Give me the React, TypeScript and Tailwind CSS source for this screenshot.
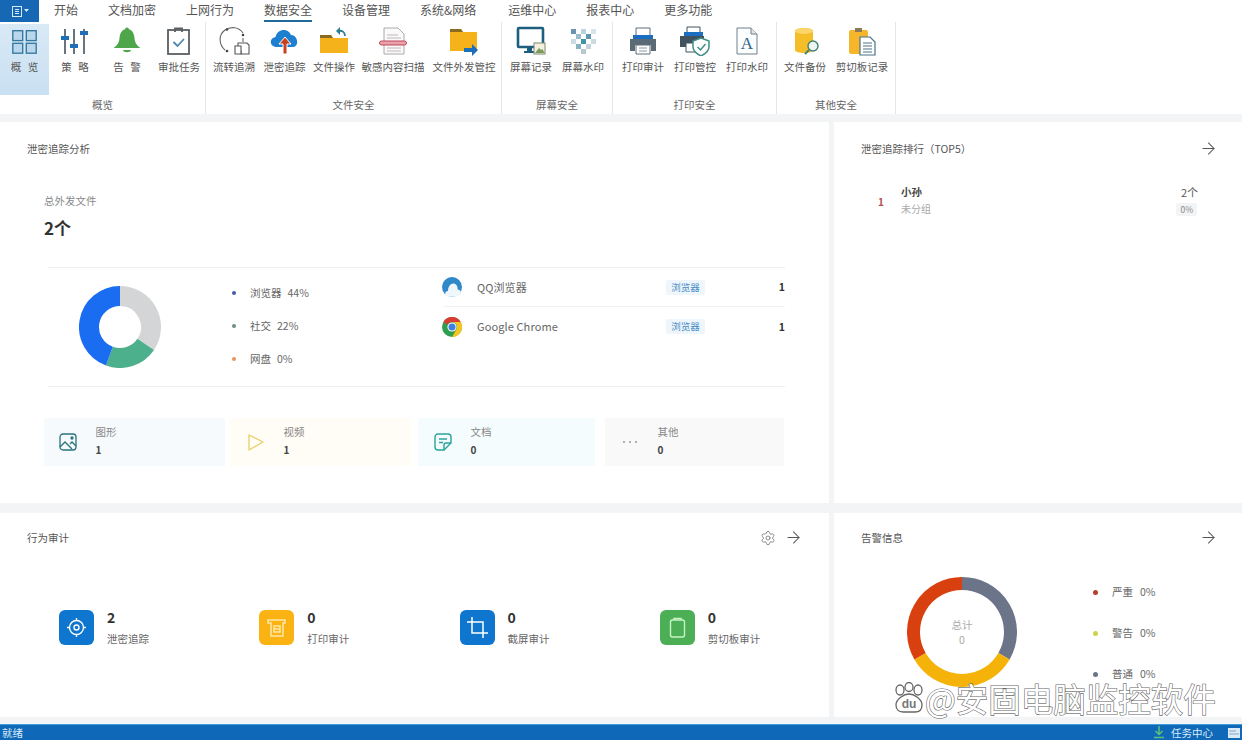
import React from 'react';
import { ArrowRight, Settings } from 'lucide-react';

const FONT = "font-['Noto_Sans_CJK_SC','Liberation_Sans',sans-serif]";

const polar = (cx: number, cy: number, r: number, deg: number) => {
  const a = ((deg - 90) * Math.PI) / 180;
  return [cx + r * Math.cos(a), cy + r * Math.sin(a)];
};

const arcPath = (cx: number, cy: number, r: number, from: number, to: number) => {
  const [x1, y1] = polar(cx, cy, r, from);
  const [x2, y2] = polar(cx, cy, r, to);
  return `M${x1} ${y1}A${r} ${r} 0 ${to - from > 180 ? 1 : 0} 1 ${x2} ${y2}`;
};

const Donut: React.FC<{ size: number; r: number; width: number; parts: { from: number; to: number; color: string }[] }> = ({ size, r, width, parts }) => (
  <svg width={size} height={size} viewBox={`0 0 ${size} ${size}`}>
    {parts.map((p) => (
      <path key={p.from} d={arcPath(size / 2, size / 2, r, p.from, p.to)} fill="none" stroke={p.color} strokeWidth={width} />
    ))}
  </svg>
);

/* ribbon icons */
const IconOverview = () => (
  <svg width="27" height="27" viewBox="0 0 30 30" fill="#b9d6ea" stroke="#33789f" strokeWidth="1.500">
    <rect x="2" y="3" width="11" height="11" /><rect x="17" y="3" width="11" height="11" />
    <rect x="2" y="17" width="11" height="11" /><rect x="17" y="17" width="11" height="11" />
  </svg>
);
const IconPolicy = () => (
  <svg width="30" height="30" viewBox="0 0 30 30">
    <path d="M5 3v25M14 3v25M24 3v25" stroke="#44525c" strokeWidth="1.600" />
    <rect x="1" y="10" width="8" height="4" fill="#1f6fb5" /><rect x="10" y="18" width="8" height="4" fill="#1f6fb5" /><rect x="20" y="5" width="8" height="4" fill="#1f6fb5" />
  </svg>
);
const IconBell = () => (
  <svg width="30" height="30" viewBox="0 0 30 30" fill="#4ea64a">
    <circle cx="15" cy="3.500" r="2" />
    <path d="M15 3c-5 0-7 4-7.500 9-.4 5-2 7-6 10h27c-4-3-5.600-5-6-10C22 7 20 3 15 3z" />
    <path d="M11 24h8c-.5 3-7.500 3-8 0z" />
  </svg>
);
const IconApprove = () => (
  <svg width="30" height="30" viewBox="0 0 30 30" fill="none" stroke="#5a5f63" strokeWidth="1.800">
    <rect x="4" y="4" width="21" height="24" />
    <path d="M11 6V2.500h7V6" />
    <path d="M9.500 16l4 4 6.500-7" stroke="#4c86a8" />
  </svg>
);
const IconFlow = () => (
  <svg width="32" height="30" viewBox="0 0 32 30" fill="none">
    <path d="M7 24C1 19 0 9 7 4c6-4 14-3 18 3" stroke="#666" strokeWidth="1.100" />
    <path d="M25 12v4" stroke="#666" strokeWidth="1.100" />
    <circle cx="9" cy="3.500" r="1.300" fill="#444" /><circle cx="25" cy="9" r="1.300" fill="#444" /><circle cx="9" cy="25" r="1.300" fill="#444" />
    <path d="M20 17h9l2 2v9h-8v-3h-3z" fill="#fff" stroke="#555" strokeWidth="1.100" />
    <path d="M17 20h6v8h-6z" fill="#fff" stroke="#555" strokeWidth="1.100" />
  </svg>
);
const IconCloud = () => (
  <svg width="30" height="30" viewBox="0 0 30 30">
    <path d="M7 21c-8 0-8-9-1.500-10C7 3 18 1 21 9c7 0 9 12 1 12z" fill="#1c7fd0" />
    <path d="M15 11l-6 7h4v10h4V18h4z" fill="#c8401c" stroke="#fff" strokeWidth="1" />
  </svg>
);
const IconFolderBack = () => (
  <svg width="30" height="30" viewBox="0 0 30 30">
    <path d="M1 9h11l2 3h15v15H1z" fill="#f6b21b" />
    <path d="M1 9h11l2 3H1z" fill="#8a6a22" />
    <path d="M26 10c0-4-3-6-7-5" fill="none" stroke="#2b7f8f" strokeWidth="1.800" />
    <path d="M21 1l-4 4 4 4z" fill="#2b7f8f" />
  </svg>
);
const IconScan = () => (
  <svg width="30" height="30" viewBox="0 0 30 30">
    <path d="M6 2h14l6 6v20H6z" fill="#fafafa" stroke="#aaa" />
    <path d="M9 9h11M9 12h14M9 22h14M9 25h14" stroke="#c4b6b6" strokeWidth="1" />
    <rect x="1.500" y="15" width="27" height="4" rx="2" fill="#e6a3aa" stroke="#c2455a" />
  </svg>
);
const IconFolderOut = () => (
  <svg width="30" height="30" viewBox="0 0 30 30">
    <path d="M1 3h11l2 3h14v19H1z" fill="#f6b21b" />
    <path d="M1 3h11l2 3H1z" fill="#8a6a22" />
    <path d="M15 22h8v-4l6 6-6 6v-4h-8z" fill="#1c6fb8" />
  </svg>
);
const IconScreen = () => (
  <svg width="30" height="30" viewBox="0 0 30 30">
    <rect x="2" y="2" width="25" height="19" rx="1" fill="#fff" stroke="#1d5f80" strokeWidth="2.600" />
    <path d="M8 25h11v2H8z" fill="#1d5f80" /><path d="M11 21h5v4h-5z" fill="#1d5f80" />
    <rect x="18" y="17" width="11" height="11" fill="#f4f0df" stroke="#7d8a6c" />
    <path d="M19 27l4-5 2 2 1.500-1 2 4z" fill="#7d9a5a" />
  </svg>
);
const IconMark = () => {
  const cells = [[3, 3, '#6c93ad'], [13, 3, '#b8d2e0'], [23, 3, '#d7e3ea'], [8, 8, '#9bbccd'], [18, 8, '#5f95ad'], [3, 13, '#c9dbe4'], [13, 13, '#3f95a5'], [23, 13, '#cfdadf'], [8, 18, '#8ab0c3'], [18, 18, '#c5d2d8'], [13, 23, '#b9c7ce']] as const;
  return (
    <svg width="30" height="30" viewBox="0 0 30 30">
      {cells.map(([x, y, c]) => <rect key={`${x}-${y}`} x={x} y={y} width="5" height="5" fill={c} />)}
    </svg>
  );
};
const IconPrinter = () => (
  <svg width="30" height="30" viewBox="0 0 30 30">
    <path d="M8 2h14v8H8z" fill="#fff" stroke="#5f6f7a" />
    <path d="M5 9h20v7H5z" fill="#1c6fc0" />
    <path d="M2 13h26v12h-5v-6H7v6H2z" fill="#5b6b76" />
    <path d="M8 19h14v9H8z" fill="#fff" stroke="#5f6f7a" />
    <path d="M11 22h8M11 25h8" stroke="#8b98a1" />
  </svg>
);
const IconPrintCtl = () => (
  <svg width="32" height="30" viewBox="0 0 32 30">
    <path d="M8 1h13v7H8z" fill="#fff" stroke="#41525e" />
    <path d="M5 6h19v6H5z" fill="#1c6fc0" />
    <path d="M1 10h24v11H1z" fill="#41525e" />
    <path d="M7 17h12v9H7z" fill="#fff" stroke="#41525e" />
    <path d="M22 12l8 3v6c0 4-4 7-8 9-4-2-8-5-8-9v-6z" fill="#fff" stroke="#3f8f86" strokeWidth="1.500" />
    <path d="M18.500 21l3 3 5-6" fill="none" stroke="#3f8f86" strokeWidth="1.500" />
  </svg>
);
const IconPrintMark = () => (
  <svg width="30" height="30" viewBox="0 0 30 30">
    <path d="M5 2h14l6 6v20H5z" fill="#fbfdff" stroke="#71808a" />
    <path d="M19 2v6h6" fill="#dfe6ea" stroke="#71808a" />
    <text x="15" y="23" textAnchor="middle" fontSize="17" fontFamily="Liberation Serif" fill="#2c6485">A</text>
  </svg>
);
const IconBackup = () => (
  <svg width="30" height="30" viewBox="0 0 30 30" className="ml-[3px]">
    <path d="M3 5c0-4 18-4 18 0v19c0 4-18 4-18 0z" fill="#f5bd28" />
    <ellipse cx="12" cy="5" rx="9" ry="3" fill="#fbd46a" />
    <circle cx="21" cy="20" r="5" fill="#eef6f4" stroke="#46806f" strokeWidth="1.400" />
    <path d="M17 24l-4 4" stroke="#46806f" strokeWidth="2" />
  </svg>
);
const IconClip = () => (
  <svg width="30" height="30" viewBox="0 0 30 30">
    <rect x="2" y="4" width="19" height="24" rx="2" fill="#f5b62c" />
    <path d="M8 6V2h7v4z" fill="#8a7a55" />
    <path d="M13 11h10l5 5v13H13z" fill="#fff" stroke="#4b7288" strokeWidth="1.200" />
    <path d="M16 17h9M16 20h9M16 23h9M16 26h9" stroke="#4b7288" />
  </svg>
);

type RibbonItem = { label: string; width: string; icon: React.ReactNode; active?: boolean };

const GROUPS: { title: string; width: string; pad: string; items: RibbonItem[] }[] = [
  {
    title: '概览', width: 'w-[206px]', pad: 'pl-0', items: [
      { label: '概 览', width: 'w-[49px]', icon: <IconOverview />, active: true },
      { label: '策 略', width: 'w-[52px]', icon: <IconPolicy /> },
      { label: '告 警', width: 'w-[52px]', icon: <IconBell /> },
      { label: '审批任务', width: 'w-[52px]', icon: <IconApprove /> },
    ],
  },
  {
    title: '文件安全', width: 'w-[296px]', pad: 'pl-[2px]', items: [
      { label: '流转追溯', width: 'w-[52px]', icon: <IconFlow /> },
      { label: '泄密追踪', width: 'w-[49px]', icon: <IconCloud /> },
      { label: '文件操作', width: 'w-[50px]', icon: <IconFolderBack /> },
      { label: '敏感内容扫描', width: 'w-[68px]', icon: <IconScan /> },
      { label: '文件外发管控', width: 'w-[74px]', icon: <IconFolderOut /> },
    ],
  },
  {
    title: '屏幕安全', width: 'w-[111px]', pad: 'pl-[3px]', items: [
      { label: '屏幕记录', width: 'w-[52px]', icon: <IconScreen /> },
      { label: '屏幕水印', width: 'w-[52px]', icon: <IconMark /> },
    ],
  },
  {
    title: '打印安全', width: 'w-[164px]', pad: 'pl-[4px]', items: [
      { label: '打印审计', width: 'w-[52px]', icon: <IconPrinter /> },
      { label: '打印管控', width: 'w-[52px]', icon: <IconPrintCtl /> },
      { label: '打印水印', width: 'w-[52px]', icon: <IconPrintMark /> },
    ],
  },
  {
    title: '其他安全', width: 'w-[119px]', pad: 'pl-[2px]', items: [
      { label: '文件备份', width: 'w-[52px]', icon: <IconBackup /> },
      { label: '剪切板记录', width: 'w-[62px]', icon: <IconClip /> },
    ],
  },
];

const TABS = ['开始', '文档加密', '上网行为', '数据安全', '设备管理', '系统&网络', '运维中心', '报表中心', '更多功能'];

const TopBar = () => (
  <header className="bg-white shrink-0">
    <div className="flex h-[22px] items-start">
      <div className="flex h-[22px] w-[39px] items-center justify-center gap-[1px] bg-[#1668b4]">
        <svg width="12" height="13" viewBox="0 0 12 13" fill="none" stroke="#d5e8f7" strokeWidth="1">
          <rect x="1.500" y="1.500" width="9" height="10" /><path d="M4 4.500h4M4 6.500h4M4 8.500h4" />
        </svg>
        <svg width="5" height="4" viewBox="0 0 5 4"><path d="M0 0h5L2.500 3z" fill="#d5e8f7" /></svg>
      </div>
      <nav className="ml-[15px] flex gap-[30px] text-[12px] leading-[20px] text-[#555]">
        {TABS.map((t) => (
          <span key={t} className={t === '数据安全' ? 'h-[22px] border-b-2 border-[#1f6a99]' : t === '系统&网络' ? 'pr-[2px]' : ''}>{t}</span>
        ))}
      </nav>
    </div>
    <div className="flex h-[92px]">
      {GROUPS.map((g) => (
        <div key={g.title} className={`${g.width} flex flex-col border-r border-[#e4e6e8]`}>
          <div className={`flex h-[71px] mt-[2px] ${g.pad}`}>
            {g.items.map((it) => (
              <div key={it.label} className={`${it.width} flex flex-col items-center pt-[2px] ${it.active ? 'bg-gradient-to-b from-[#d9e9f6] to-[#c9e0f2]' : ''}`}>
                <div className="flex h-[30px] items-center justify-center">{it.icon}</div>
                <span className="mt-[4px] whitespace-nowrap text-[10.500px] leading-[14px] text-[#555] [word-spacing:4px]">{it.label}</span>
              </div>
            ))}
          </div>
          <div className="mt-[3px] text-center text-[10.500px] leading-[14px] text-[#666]">{g.title}</div>
        </div>
      ))}
    </div>
  </header>
);

const LEGEND = [
  { dot: 'bg-[#4a5aa8]', label: '浏览器', value: '44%' },
  { dot: 'bg-[#6f8d84]', label: '社交', value: '22%' },
  { dot: 'bg-[#e8935a]', label: '网盘', value: '0%' },
];

const QqLogo = () => (
  <svg width="20" height="20" viewBox="0 0 20 20">
    <circle cx="10" cy="10" r="10" fill="#2f88c8" />
    <path d="M5 19c-3-1-2-5 1-5 0-5 3-8 6-7.500 3 .5 4 4 3.500 6 3 0 4.500 3 3 5.500-3 2-9 2.500-13.500 1z" fill="#f0f7fb" />
  </svg>
);
const ChromeLogo = () => (
  <svg width="20" height="20" viewBox="0 0 20 20">
    <circle cx="10" cy="10" r="10" fill="#2e9e4f" />
    <path d="M1.300 5A10 10 0 0 1 18.700 5H10A5 5 0 0 0 5.700 7.500z" fill="#d93c32" />
    <path d="M18.700 5A10 10 0 0 1 10 20l4.300-7.500A5 5 0 0 0 10 5z" fill="#f6c41c" />
    <circle cx="10" cy="10" r="4.600" fill="#fff" />
    <circle cx="10" cy="10" r="3.500" fill="#3f7fe0" />
  </svg>
);

const IconImage = () => (
  <svg width="18" height="18" viewBox="0 0 18 18" fill="none" stroke="#28737e" strokeWidth="1.300">
    <rect x="1" y="1" width="16" height="16" rx="3" /><path d="M1 14l5-5 7 7M11 11l2-2 4 4" /><circle cx="13" cy="5" r="1" fill="#28737e" />
  </svg>
);
const IconPlay = () => (
  <svg width="18" height="18" viewBox="0 0 18 18" fill="none" stroke="#e8cf6a" strokeWidth="1.300">
    <path d="M2 2l14 7-14 8z" strokeLinejoin="round" />
  </svg>
);
const IconDoc = () => (
  <svg width="18" height="18" viewBox="0 0 18 18" fill="none" stroke="#2aa39b" strokeWidth="1.400">
    <path d="M4 1h10a3 3 0 0 1 3 3v6l-7 7H4a3 3 0 0 1-3-3V4a3 3 0 0 1 3-3z" /><path d="M5 6h8M5 9.500h4M10 17v-5a2 2 0 0 1 2-2h5" />
  </svg>
);
const IconMore = () => (
  <svg width="16" height="4" viewBox="0 0 16 4" fill="#999">
    <circle cx="2" cy="2" r="1" /><circle cx="8" cy="2" r="1" /><circle cx="14" cy="2" r="1" />
  </svg>
);

const TYPES = [
  { name: '图形', count: 1, box: 'w-[181px] bg-[#f6fafd] pl-[15px]', icon: <IconImage /> },
  { name: '视频', count: 1, box: 'ml-[5px] w-[181px] bg-[#fffdf6] pl-[17px]', icon: <IconPlay /> },
  { name: '文档', count: 0, box: 'ml-[7px] w-[177px] bg-[#f5fcfd] pl-[16px]', icon: <IconDoc /> },
  { name: '其他', count: 0, box: 'ml-[10px] w-[179px] bg-[#f9f9f9] pl-[16px]', icon: <IconMore /> },
];

const BROWSERS = [
  { name: 'QQ浏览器', logo: <QqLogo /> },
  { name: 'Google Chrome', logo: <ChromeLogo /> },
];

const LeakPanel = () => (
  <section className="h-[381px] bg-white">
    <h2 className="pl-[27px] pt-[19px] text-[10.500px] leading-[15px] text-[#555]">泄密追踪分析</h2>
    <div className="pl-[44px] pt-[37px] text-[10.500px] leading-[15px] text-[#888]">总外发文件</div>
    <div className="pl-[44px] pt-[8px] text-[17px] font-bold leading-[24px] text-[#333]">2个</div>
    <div className="ml-[48px] mt-[27px] flex h-[120px] w-[737px] border-y border-[#eceef0]">
      <div className="ml-[31px] flex w-[82px] items-center">
        <Donut size={82} r={31} width={20} parts={[
          { from: 0, to: 124, color: '#d4d5d6' },
          { from: 124, to: 200, color: '#4db08c' },
          { from: 200, to: 360, color: '#1a6cf0' },
        ]} />
      </div>
      <div className="ml-[71px] flex w-[212px] flex-col gap-[17px] pt-[17px]">
        {LEGEND.map((l) => (
          <div key={l.label} className="flex h-[16px] items-center text-[10.500px] text-[#666]">
            <span className={`h-[4px] w-[4px] rounded-full ${l.dot}`} />
            <span className="ml-[14px]">{l.label}</span>
            <span className="ml-[6px]">{l.value}</span>
          </div>
        ))}
      </div>
      <div className="flex flex-1 flex-col">
        {BROWSERS.map((b, i) => (
          <div key={b.name} className={`flex h-[39px] items-center ${i === 0 ? 'border-b border-[#f0f1f2]' : ''}`}>
            <span className="ml-[-2px] w-[20px]">{b.logo}</span>
            <span className="ml-[15px] w-[189px] text-[11px] tracking-[0.1px] text-[#666]">{b.name}</span>
            <span className="w-[39px] rounded-[2px] bg-[#eef6fc] text-center text-[9.500px] leading-[15px] text-[#4a8cc4]">浏览器</span>
            <span className="ml-auto text-[10.500px] font-bold text-[#333]">1</span>
          </div>
        ))}
      </div>
    </div>
    <div className="ml-[44px] mt-[31px] flex w-[740px]">
      {TYPES.map((t) => (
        <div key={t.name} className={`${t.box} flex h-[48px] shrink-0 items-center`}>
          <span className="flex w-[18px] justify-center">{t.icon}</span>
          <div className="ml-[18.500px] mt-[-2px]">
            <div className="text-[10.500px] leading-[16px] text-[#888]">{t.name}</div>
            <div className="mt-[2px] text-[10px] font-bold leading-[16px] text-[#444]">{t.count}</div>
          </div>
        </div>
      ))}
    </div>
  </section>
);

const RankPanel = () => (
  <section className="h-[381px] bg-white">
    <div className="flex items-center justify-between pl-[27px] pr-[24px] pt-[17px]">
      <h2 className="text-[10.500px] leading-[19px] text-[#555]">泄密追踪排行（TOP5）</h2>
      <ArrowRight size={19} strokeWidth={1.300} className="text-[#555]" />
    </div>
    <div className="mt-[26px] flex pl-[44px] pr-[44px]">
      <span className="w-[23px] pt-[11px] text-[10px] font-bold leading-[14px] text-[#b5504a]">1</span>
      <div>
        <div className="text-[10.500px] font-bold leading-[16px] text-[#444]">小孙</div>
        <div className="text-[10px] leading-[18px] text-[#aaa]">未分组</div>
      </div>
      <div className="ml-auto flex flex-col items-end">
        <div className="text-[11px] leading-[16px] text-[#555]">2个</div>
        <div className="mt-[3px] mr-[1px] rounded-[2px] bg-[#f3f4f5] px-[4px] text-[8.500px] leading-[13px] text-[#888]">0%</div>
      </div>
    </div>
  </section>
);

const AUDITS = [
  { value: 2, label: '泄密追踪', bg: 'bg-[#0f76cf]', icon: (
    <svg width="21" height="21" viewBox="0 0 21 21" fill="none" stroke="#fff" strokeWidth="1.400"><circle cx="10.500" cy="10.500" r="7" /><circle cx="10.500" cy="10.500" r="2.500" /><path d="M10.500 1v3M10.500 17v3M1 10.500h3M17 10.500h3" /></svg>
  ) },
  { value: 0, label: '打印审计', bg: 'bg-[#fbb313]', icon: (
    <svg width="21" height="21" viewBox="0 0 21 21" fill="none" stroke="#ffe9a8" strokeWidth="1.500"><path d="M2 3h17v3h-2v13H5V6H2z" /><path d="M8 9h6v6H8zM8 12h6" /></svg>
  ) },
  { value: 0, label: '截屏审计', bg: 'bg-[#0f76cf]', icon: (
    <svg width="21" height="21" viewBox="0 0 21 21" fill="none" stroke="#fff" strokeWidth="1.500"><path d="M5 0v16h16" /><path d="M0 5h16v16" /></svg>
  ) },
  { value: 0, label: '剪切板审计', bg: 'bg-[#4cae55]', icon: (
    <svg width="21" height="21" viewBox="0 0 21 21" fill="none" stroke="#c9f5c6" strokeWidth="1.400"><rect x="3.500" y="3" width="14" height="17" rx="2" /><path d="M7 3V1.500h7V3" /></svg>
  ) },
];

const AuditPanel = () => (
  <section className="h-[204px] bg-white">
    <div className="flex items-center pl-[27px] pr-[26px] pt-[15px]">
      <h2 className="text-[10.500px] leading-[19px] text-[#555]">行为审计</h2>
      <Settings size={16} strokeWidth={1.100} className="ml-auto text-[#666]" />
      <ArrowRight size={19} strokeWidth={1.300} className="ml-[8px] text-[#555]" />
    </div>
    <div className="mt-[63px] flex pl-[59px]">
      {AUDITS.map((a) => (
        <div key={a.label} className="flex w-[200.250px] shrink-0">
          <div className={`${a.bg} flex h-[35px] w-[35px] items-center justify-center rounded-[6px]`}>{a.icon}</div>
          <div className="ml-[13px] mt-[-2px]">
            <div className="text-[14px] font-bold leading-[18px] text-[#333]">{a.value}</div>
            <div className="mt-[5px] text-[10.500px] leading-[15px] text-[#666]">{a.label}</div>
          </div>
        </div>
      ))}
    </div>
  </section>
);

const ALERTS = [
  { dot: 'bg-[#b5402f]', label: '严重' },
  { dot: 'bg-[#cfd24a]', label: '警告' },
  { dot: 'bg-[#6b7488]', label: '普通' },
];

const AlertPanel = () => (
  <section className="h-[204px] bg-white">
    <div className="flex items-center justify-between pl-[27px] pr-[24px] pt-[15px]">
      <h2 className="text-[10.500px] leading-[19px] text-[#555]">告警信息</h2>
      <ArrowRight size={19} strokeWidth={1.300} className="text-[#555]" />
    </div>
    <div className="mt-[30px] flex pl-[73px]">
      <div className="relative h-[110px] w-[110px]">
        <Donut size={110} r={48.500} width={13} parts={[
          { from: 0, to: 120, color: '#6b7488' },
          { from: 120, to: 240, color: '#f5b30a' },
          { from: 240, to: 360, color: '#d9400f' },
        ]} />
        <div className="absolute inset-0 flex flex-col items-center justify-center text-[10.500px] leading-[15px] text-[#aaa]">
          <span>总计</span>
          <span>0</span>
        </div>
      </div>
      <div className="ml-[76px] flex flex-col gap-[25px] pt-[7px]">
        {ALERTS.map((a) => (
          <div key={a.label} className="flex h-[16px] items-center text-[10.500px] text-[#666]">
            <span className={`h-[5px] w-[5px] rounded-full ${a.dot}`} />
            <span className="ml-[14px]">{a.label}</span>
            <span className="ml-[7px]">0%</span>
          </div>
        ))}
      </div>
    </div>
  </section>
);

const StatusBar = () => (
  <footer className="flex h-[16px] shrink-0 items-center border-t border-[#3f9ed8] bg-[#0f68b8] text-[10.500px] text-[#dcecf8]">
    <span className="pl-[2px]">就绪</span>
    <svg width="12" height="13" viewBox="0 0 12 13" className="ml-auto" fill="none" stroke="#5fc07a" strokeWidth="1.500">
      <path d="M6 0v8M2.500 5L6 8.500 9.500 5M1 11.500h10" />
    </svg>
    <span className="ml-[6px]">任务中心</span>
    <svg width="12" height="10" viewBox="0 0 12 10" className="ml-[15px] mr-[2px]">
      <rect width="12" height="10" fill="#dceaf5" /><path d="M1 3h7M1 6h10" stroke="#7fa9c9" />
    </svg>
  </footer>
);

const Watermark = () => (
  <div className="absolute left-[893px] top-[682px] flex items-center">
    <svg width="32" height="32" viewBox="0 0 32 32" fill="#fff" stroke="#666" strokeWidth="1.300">
      <ellipse cx="7" cy="8" rx="4" ry="5" /><ellipse cx="16" cy="5" rx="4" ry="4.500" /><ellipse cx="25" cy="8" rx="4" ry="5" />
      <path d="M3 23c0-6 8-11 13-11s13 5 13 11c0 5-3 7-7 7H10c-4 0-7-2-7-7z" />
      <text x="16" y="26" textAnchor="middle" fontSize="12" fontFamily="Liberation Sans" fontWeight="bold" fill="#777" stroke="none">du</text>
    </svg>
    <span className="whitespace-nowrap text-[32.500px] leading-[30px] text-white [-webkit-text-stroke:1.200px_#666] [paint-order:stroke]">@安固电脑监控软件</span>
  </div>
);

export default function App() {
  return (
    <div className={`${FONT} relative flex h-[740px] w-[1242px] flex-col overflow-hidden bg-[#f2f4f5]`}>
      <TopBar />
      <main className="mt-[8px] grid flex-1 grid-cols-[829px_408px] content-start gap-x-[5px] gap-y-[10px]">
        <LeakPanel />
        <RankPanel />
        <AuditPanel />
        <AlertPanel />
      </main>
      <StatusBar />
      <Watermark />
    </div>
  );
}
